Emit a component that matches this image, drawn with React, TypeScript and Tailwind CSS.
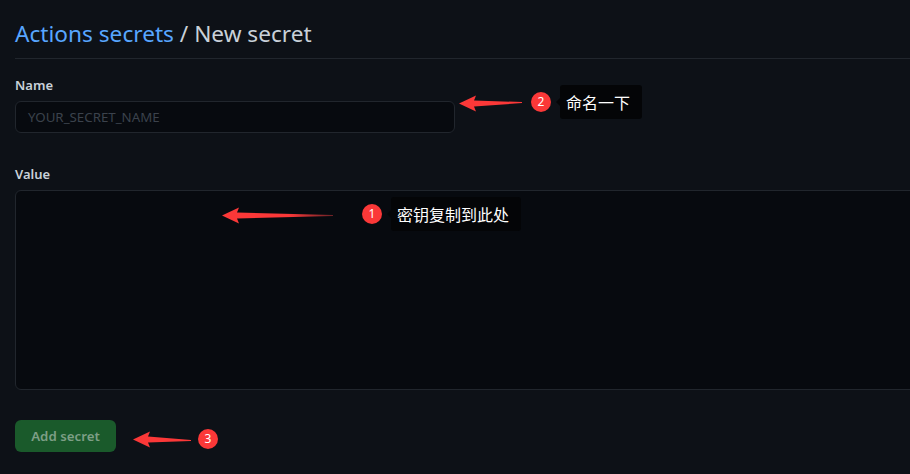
const SANS = "font-['Noto_Sans','Open_Sans',sans-serif]";

function Arrow({ className, width, id, fade, tilt = 0 }: { className?: string; width: number; id: string; fade?: boolean; tilt?: number }) {
  const height = 17;
  const mid = height / 2;
  const tail = mid + tilt;
  return (
    <svg className={className} width={width} height={height} viewBox={`0 0 ${width} ${height}`}>
      <defs>
        <linearGradient id={id} x1="0" x2="1" y1="0" y2="0">
          <stop offset="0" stopColor="#fb3838" />
          <stop offset="0.6" stopColor="#fb3838" />
          <stop offset="1" stopColor={fade ? "#6b2226" : "#fb3838"} />
        </linearGradient>
      </defs>
      <path
        d={`M0 ${mid} L17 ${mid - 8} L15 ${mid - 3} L${width} ${tail - 0.5} L${width} ${tail + 0.5} L15 ${mid + 3} L17 ${mid + 8} Z`}
        fill={`url(#${id})`}
      />
    </svg>
  );
}

function Badge({ n }: { n: number }) {
  return (
    <div className="flex h-5 w-5 shrink-0 items-center justify-center rounded-full bg-[#fb3838] text-[12px] text-white">
      {n}
    </div>
  );
}

function Tip({ text, className }: { text: string; className: string }) {
  return (
    <div className={`relative ml-[9px] flex h-[34px] items-center rounded-[3px] bg-[#040507] pl-[6px] text-[16px] text-white font-['Noto_Sans_CJK_SC',sans-serif] ${className}`}>
      <span className="absolute left-[-4px] top-[13px] h-0 w-0 border-y-4 border-r-4 border-y-transparent border-r-[#040507]" />
      {text}
    </div>
  );
}

export default function App() {
  return (
    <div className={`relative h-[474px] w-[910px] overflow-hidden bg-[#0d1117] pl-[15px] ${SANS}`}>
      <div className="h-[59px] border-b border-[#21262d] pt-[16px]">
        <h1 className="text-[22.65px] leading-[36px] text-[#c9d1d9]">
          <a className="text-[#58a6ff]">Actions secrets</a> / New secret
        </h1>
      </div>

      <label className="mt-[17px] block text-[13px] font-semibold leading-[18px] text-[#c9d1d9]">Name</label>
      <div className="mt-[7px] flex h-[32px] w-[440px] items-center rounded-md border border-[#21262d] bg-[#070a0f] px-3 pt-[2px] text-[13.3px] text-[#3b424c]">
        YOUR_SECRET_NAME
      </div>

      <label className="mt-[32px] block text-[13px] font-semibold leading-[18px] text-[#c9d1d9]">Value</label>
      <div className="mt-[7px] h-[200px] w-[1000px] rounded-md border border-[#21262d] bg-[#070a0f]" />

      <button className="mt-[30px] block h-[32px] w-[101px] rounded-md bg-[#1a5a2b] pt-[1px] text-center text-[13.3px] font-semibold text-[#7d9f86]">
        Add secret
      </button>

      <div className="absolute left-[459px] top-[85px] flex items-center">
        <Arrow id="a2" className="mt-[2px]" width={63} tilt={-1} />
        <div className="ml-[9px]"><Badge n={2} /></div>
        <Tip text="命名一下" className="w-[82px]" />
      </div>

      <div className="absolute left-[222px] top-[197px] flex items-center">
        <Arrow id="a1" fade className="mt-[3px]" width={111} />
        <div className="ml-[29px]"><Badge n={1} /></div>
        <Tip text="密钥复制到此处" className="w-[130px]" />
      </div>

      <div className="absolute left-[133px] top-[429px] flex items-center">
        <Arrow id="a3" width={58} tilt={1} />
        <div className="ml-[7px]"><Badge n={3} /></div>
      </div>
    </div>
  );
}
